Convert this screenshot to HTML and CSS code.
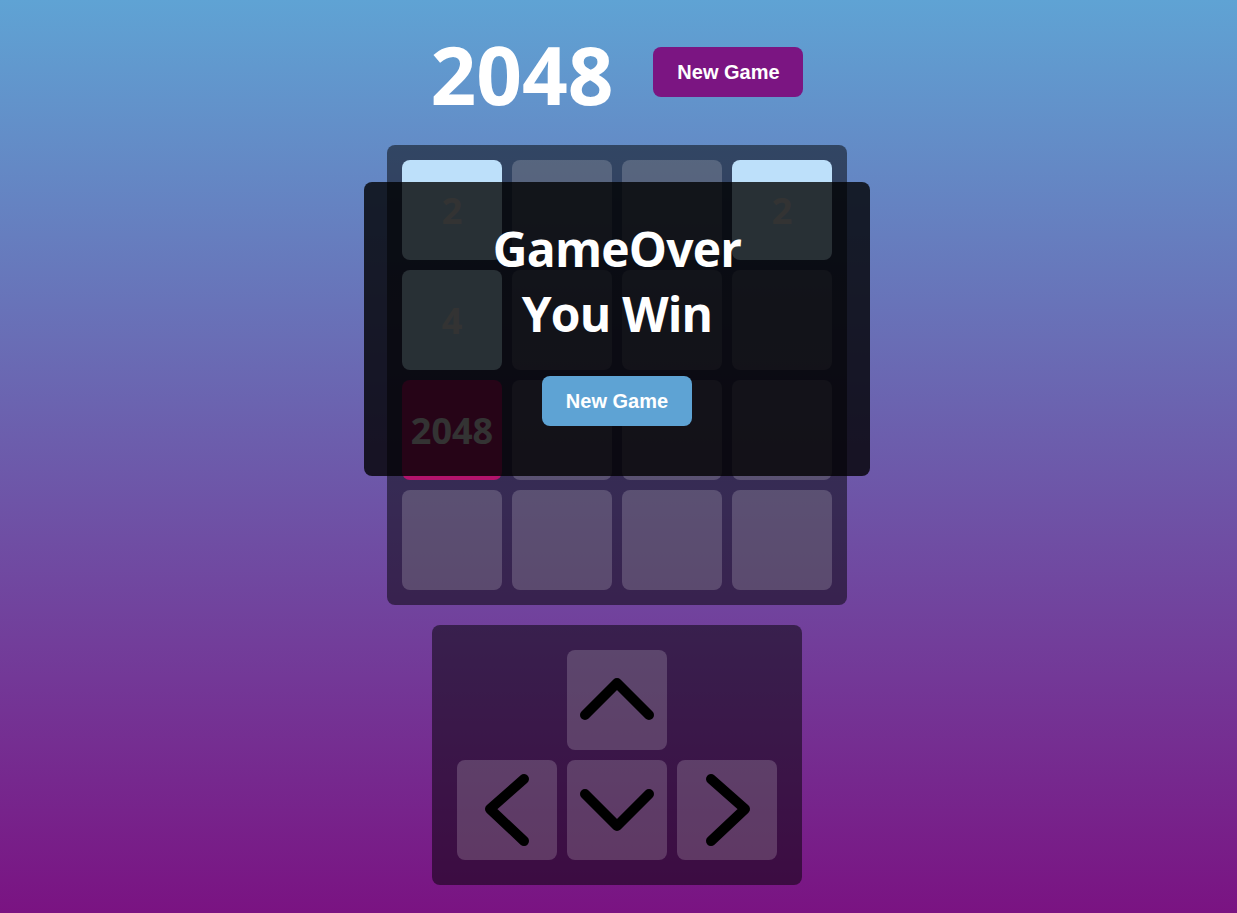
FILE: index.html
```html
<!DOCTYPE html>
<html lang="en">
<head>
<meta charset="utf-8">
<title>2048</title>
<link rel="stylesheet" href="styles.css">
</head>
<body>
<main class="app">
  <header class="header">
    <h1 class="title">2048</h1>
    <button class="btn btn-purple">New Game</button>
  </header>

  <section class="board-wrap">
    <div class="board">
      <div class="cell tile-2">2</div>
      <div class="cell"></div>
      <div class="cell"></div>
      <div class="cell tile-2">2</div>
      <div class="cell tile-4">4</div>
      <div class="cell"></div>
      <div class="cell"></div>
      <div class="cell"></div>
      <div class="cell tile-2048">2048</div>
      <div class="cell"></div>
      <div class="cell"></div>
      <div class="cell"></div>
      <div class="cell"></div>
      <div class="cell"></div>
      <div class="cell"></div>
      <div class="cell"></div>
    </div>
    <div class="overlay">
      <p class="overlay-text">GameOver<br>You Win</p>
      <button class="btn btn-blue">New Game</button>
    </div>
  </section>

  <section class="controls">
    <button class="ctrl ctrl-up" aria-label="Up">
      <svg viewBox="0 0 100 100" width="100" height="100"><path d="M18 65 L50 33 L82 65"/></svg>
    </button>
    <button class="ctrl ctrl-left" aria-label="Left">
      <svg viewBox="0 0 100 100" width="100" height="100"><path d="M67 19 L33 49 L67 81"/></svg>
    </button>
    <button class="ctrl ctrl-down" aria-label="Down">
      <svg viewBox="0 0 100 100" width="100" height="100"><path d="M18 34 L50 66 L82 34"/></svg>
    </button>
    <button class="ctrl ctrl-right" aria-label="Right">
      <svg viewBox="0 0 100 100" width="100" height="100"><path d="M34 19 L68 49 L34 81"/></svg>
    </button>
  </section>
</main>
</body>
</html>
```

FILE: styles.css
```css
html, body {
  margin: 0;
  padding: 0;
  height: 100%;
}

body {
  background: linear-gradient(to bottom, #5fa3d4 0%, #7a1382 100%);
  font-family: "Open Sans", "Noto Sans", sans-serif;
  color: #fff;
  overflow: hidden;
}

.app {
  display: flex;
  flex-direction: column;
  align-items: center;
  padding-top: 34px;
  padding-right: 3px;
}

.header {
  display: flex;
  align-items: flex-start;
  gap: 40px;
  height: 80px;
}

.title {
  margin: 0;
  font-size: 80px;
  line-height: 80px;
  font-weight: 700;
  color: #fff;
}

.btn {
  width: 150px;
  height: 50px;
  border: none;
  border-radius: 8px;
  color: #fff;
  font-family: "Liberation Sans", Arial, sans-serif;
  font-weight: 700;
  font-size: 20px;
  padding: 0;
  cursor: pointer;
}

.btn-purple {
  background: #7b1582;
  margin-top: 13px;
}

.btn-blue {
  background: #5ea3d4;
  margin-top: 30px;
}

.board-wrap {
  position: relative;
  margin-top: 31px;
}

.board {
  display: grid;
  grid-template-columns: repeat(4, 100px);
  grid-auto-rows: 100px;
  gap: 10px;
  padding: 15px;
  background: rgba(0, 0, 0, 0.5);
  border-radius: 8px;
}

.cell {
  border-radius: 8px;
  background: rgba(255, 255, 255, 0.18);
  display: flex;
  align-items: center;
  justify-content: center;
  font-size: 36px;
  font-weight: 700;
  color: #f2f2f2;
}

.tile-2 { background: #bde0fa; }
.tile-4 { background: #bde0fa; }
.tile-2048 { background: #b3146c; }

.overlay {
  position: absolute;
  top: 37px;
  left: -23px;
  width: 506px;
  height: 294px;
  box-sizing: border-box;
  padding-top: 34px;
  background: rgba(0, 0, 0, 0.79);
  border-radius: 8px;
  display: flex;
  flex-direction: column;
  align-items: center;
}

.overlay-text {
  margin: 0;
  font-size: 48px;
  letter-spacing: -0.8px;
  font-weight: 700;
  line-height: 65px;
  text-align: center;
  color: #fff;
}

.controls {
  margin-top: 20px;
  display: grid;
  grid-template-columns: repeat(3, 100px);
  grid-template-rows: 100px 100px;
  gap: 10px;
  padding: 25px;
  background: rgba(0, 0, 0, 0.5);
  border-radius: 8px;
}

.ctrl {
  width: 100px;
  height: 100px;
  padding: 0;
  border: none;
  border-radius: 8px;
  background: rgba(255, 255, 255, 0.18);
  display: flex;
  cursor: pointer;
}

.ctrl svg {
  display: block;
}

.ctrl path {
  fill: none;
  stroke: #000;
  stroke-width: 10;
  stroke-linecap: round;
  stroke-linejoin: round;
}

.ctrl-up { grid-column: 2; grid-row: 1; }
.ctrl-left { grid-column: 1; grid-row: 2; }
.ctrl-down { grid-column: 2; grid-row: 2; }
.ctrl-right { grid-column: 3; grid-row: 2; }
```
